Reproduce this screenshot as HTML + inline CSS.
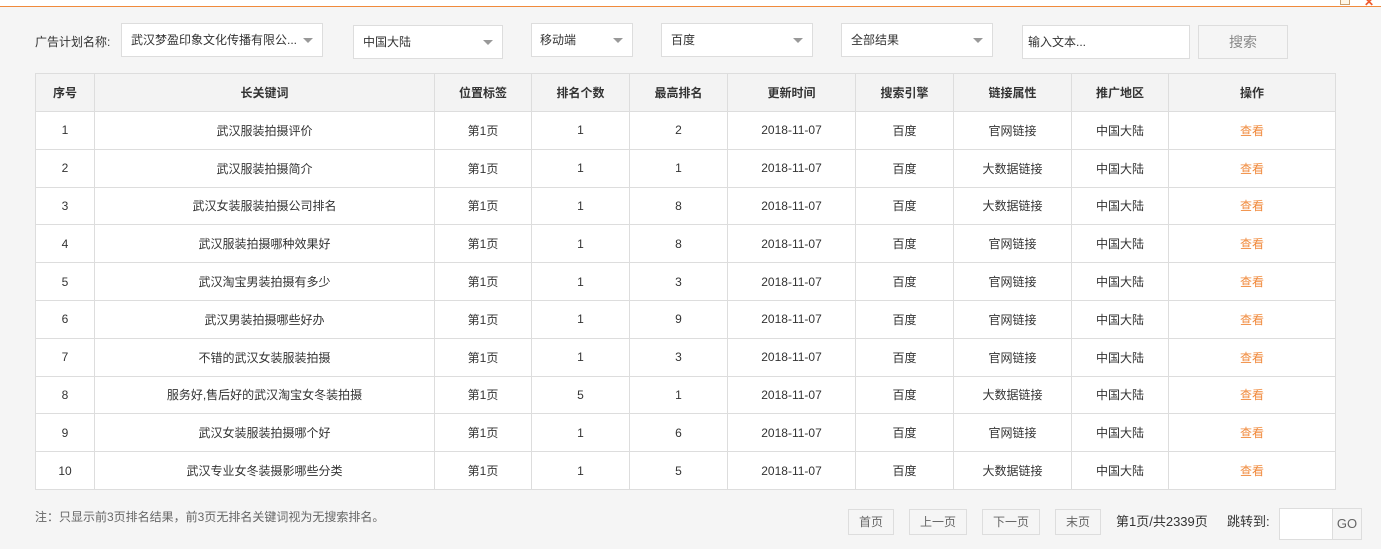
<!DOCTYPE html>
<html><head><meta charset="utf-8"><style>
*{margin:0;padding:0;box-sizing:border-box}
body{width:1387px;height:549px;background:#fff;font-family:"Liberation Sans","Noto Sans CJK SC",sans-serif;font-size:12px;color:#333;position:relative;overflow:hidden}
#bg{position:absolute;left:0;top:6px;width:1381px;height:543px;background:#f5f5f5;border-top:1px solid #f08a3c}
.a{position:absolute}
.sel{position:absolute;background:#fff;border:1px solid #ddd;height:34px;line-height:32px;padding-left:9px;color:#333}
.sel.arr:after{content:"";position:absolute;right:9px;top:14px;border-left:5px solid transparent;border-right:5px solid transparent;border-top:5px solid #999}
table{position:absolute;left:35px;top:73px;border-collapse:collapse;table-layout:fixed;background:#fff}
td,th{border:1px solid #ddd;text-align:center;height:37.8px;font-size:12px;color:#333;padding:0}
th{background:#f3f3f3;font-weight:bold;height:38px}
td.o{color:#f08a3c}
.btn{position:absolute;border:1px solid #ddd;background:#f5f5f5;color:#666;text-align:center}
</style></head><body>
<div id="bg"></div>
<div class="a" style="left:1340px;top:0;width:10px;height:5px;border:1px solid #c9a070;border-top:none;background:#fff8e8"></div>
<div class="a" style="left:1364px;top:-2px;color:#f05a2c;font-size:12px;font-weight:bold;line-height:8px">✕</div>
<div class="a" style="left:35px;top:35px;line-height:14px">广告计划名称:</div>
<div class="sel arr" style="left:121px;top:23px;width:202px">武汉梦盈印象文化传播有限公...</div>
<div class="sel arr" style="left:353px;top:25px;width:150px">中国大陆</div>
<div class="sel arr" style="left:531px;top:23px;width:102px;padding-left:8px">移动端</div>
<div class="sel arr" style="left:661px;top:23px;width:152px">百度</div>
<div class="sel arr" style="left:841px;top:23px;width:152px">全部结果</div>
<div class="sel" style="left:1022px;top:25px;width:168px;padding-left:5px">输入文本...</div>
<div class="btn" style="left:1198px;top:25px;width:90px;height:34px;line-height:32px;font-size:14px;color:#888">搜索</div>
<table>
<colgroup><col style="width:59px"><col style="width:340px"><col style="width:97px"><col style="width:98px"><col style="width:98px"><col style="width:128px"><col style="width:98px"><col style="width:118px"><col style="width:97px"><col style="width:167px"></colgroup>
<tr><th>序号</th><th>长关键词</th><th>位置标签</th><th>排名个数</th><th>最高排名</th><th>更新时间</th><th>搜索引擎</th><th>链接属性</th><th>推广地区</th><th>操作</th></tr>
<tr><td>1</td><td>武汉服装拍摄评价</td><td>第1页</td><td>1</td><td>2</td><td>2018-11-07</td><td>百度</td><td>官网链接</td><td>中国大陆</td><td class="o">查看</td></tr>
<tr><td>2</td><td>武汉服装拍摄简介</td><td>第1页</td><td>1</td><td>1</td><td>2018-11-07</td><td>百度</td><td>大数据链接</td><td>中国大陆</td><td class="o">查看</td></tr>
<tr><td>3</td><td>武汉女装服装拍摄公司排名</td><td>第1页</td><td>1</td><td>8</td><td>2018-11-07</td><td>百度</td><td>大数据链接</td><td>中国大陆</td><td class="o">查看</td></tr>
<tr><td>4</td><td>武汉服装拍摄哪种效果好</td><td>第1页</td><td>1</td><td>8</td><td>2018-11-07</td><td>百度</td><td>官网链接</td><td>中国大陆</td><td class="o">查看</td></tr>
<tr><td>5</td><td>武汉淘宝男装拍摄有多少</td><td>第1页</td><td>1</td><td>3</td><td>2018-11-07</td><td>百度</td><td>官网链接</td><td>中国大陆</td><td class="o">查看</td></tr>
<tr><td>6</td><td>武汉男装拍摄哪些好办</td><td>第1页</td><td>1</td><td>9</td><td>2018-11-07</td><td>百度</td><td>官网链接</td><td>中国大陆</td><td class="o">查看</td></tr>
<tr><td>7</td><td>不错的武汉女装服装拍摄</td><td>第1页</td><td>1</td><td>3</td><td>2018-11-07</td><td>百度</td><td>官网链接</td><td>中国大陆</td><td class="o">查看</td></tr>
<tr><td>8</td><td>服务好,售后好的武汉淘宝女冬装拍摄</td><td>第1页</td><td>5</td><td>1</td><td>2018-11-07</td><td>百度</td><td>大数据链接</td><td>中国大陆</td><td class="o">查看</td></tr>
<tr><td>9</td><td>武汉女装服装拍摄哪个好</td><td>第1页</td><td>1</td><td>6</td><td>2018-11-07</td><td>百度</td><td>官网链接</td><td>中国大陆</td><td class="o">查看</td></tr>
<tr><td>10</td><td>武汉专业女冬装摄影哪些分类</td><td>第1页</td><td>1</td><td>5</td><td>2018-11-07</td><td>百度</td><td>大数据链接</td><td>中国大陆</td><td class="o">查看</td></tr>
</table>
<div class="a" style="left:35px;top:510px;color:#666;line-height:14px">注：只显示前3页排名结果，前3页无排名关键词视为无搜索排名。</div>
<div class="btn" style="left:848px;top:509px;width:46px;height:26px;line-height:24px">首页</div>
<div class="btn" style="left:909px;top:509px;width:58px;height:26px;line-height:24px">上一页</div>
<div class="btn" style="left:982px;top:509px;width:58px;height:26px;line-height:24px">下一页</div>
<div class="btn" style="left:1055px;top:509px;width:46px;height:26px;line-height:24px">末页</div>
<div class="a" style="left:1116px;top:515px;line-height:14px;font-size:13px">第1页/共2339页</div>
<div class="a" style="left:1227px;top:515px;line-height:14px;font-size:13px">跳转到:</div>
<div class="a" style="left:1279px;top:508px;width:54px;height:32px;background:#fff;border:1px solid #ddd"></div>
<div class="btn" style="left:1332px;top:508px;width:30px;height:32px;line-height:30px;font-size:13px">GO</div>
</body></html>
